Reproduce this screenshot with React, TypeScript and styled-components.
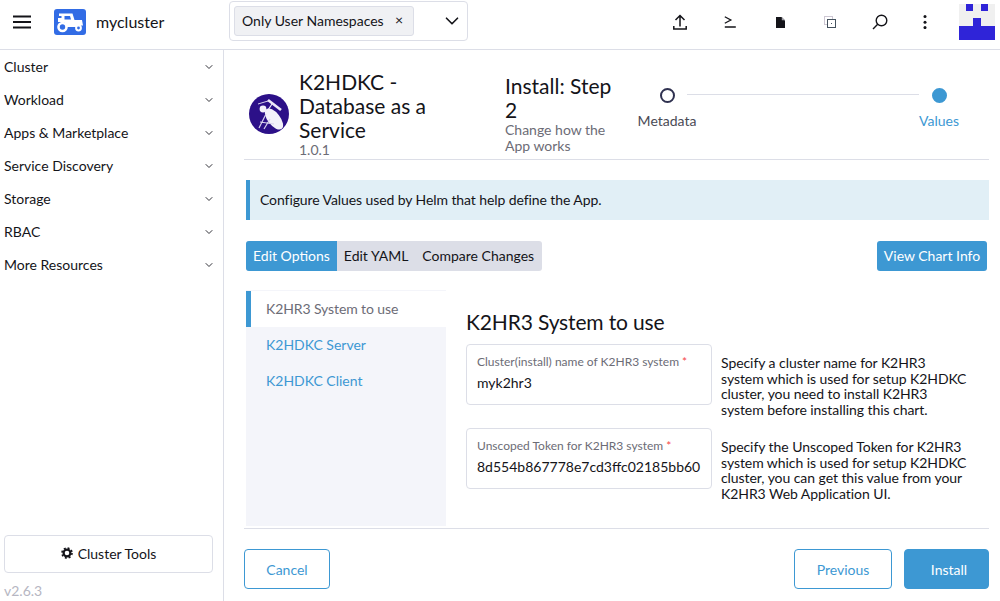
import { ChevronDown } from "lucide-react";
import styled, { createGlobalStyle } from "styled-components";

const GlobalStyle = createGlobalStyle`
  html, body {
    margin: 0;
    padding: 0;
    background: #fff;
  }
  * {
    box-sizing: border-box;
  }
  body {
    font-family: Lato, "Liberation Sans", sans-serif;
    font-size: 14px;
    color: #141419;
  }
`;

const Page = styled.div`
  width: 1000px;
  height: 601px;
  display: grid;
  grid-template-rows: 50px minmax(0, 1fr);
  grid-template-columns: 224px minmax(0, 1fr);
  overflow: hidden;
`;

const Header = styled.header`
  grid-column: 1 / 3;
  display: flex;
  align-items: center;
  padding-bottom: 5px;
  border-bottom: 1px solid #dcdee7;
`;

const Burger = styled.div`
  width: 54px;
  padding-left: 13px;
  display: flex;
`;

const ClusterBadge = styled.div`
  width: 32px;
  height: 26px;
  border-radius: 3px;
  background: #326ce5;
  display: flex;
`;

const ClusterName = styled.div`
  font-size: 16px;
  margin-left: 10px;
  width: 133px;
  padding-bottom: 2px;
`;

const NamespaceBox = styled.div`
  width: 239px;
  height: 40px;
  align-self: flex-start;
  margin-top: 1px;
  border: 1px solid #dcdee7;
  border-radius: 4px;
  padding: 4px;
  display: flex;
  align-items: center;
  justify-content: space-between;
`;

const NamespaceChip = styled.div`
  width: 180px;
  height: 30px;
  background: #f0f1f4;
  border: 1px solid #dcdee7;
  border-radius: 3px;
  padding: 0 10px 2px 7px;
  display: flex;
  align-items: center;
  justify-content: space-between;
  white-space: nowrap;
`;

const ChipClose = styled.span`
  font-size: 14px;
  line-height: 1;
`;

const HeaderActions = styled.div`
  margin-left: auto;
  display: flex;
  align-items: center;
  align-self: stretch;
`;

const ActionSlot = styled.div<{ $narrow?: boolean }>`
  width: ${(p) => (p.$narrow ? "40px" : "50px")};
  display: flex;
  align-items: center;
  justify-content: center;
`;

const Avatar = styled.div`
  width: 36px;
  height: 36px;
  margin: 0 5px 0 14px;
  flex: none;
  display: flex;
`;

const Sidebar = styled.aside`
  border-right: 1px solid #dcdee7;
  display: flex;
  flex-direction: column;
  min-height: 0;
`;

const NavList = styled.nav`
  flex: 1;
`;

const NavItem = styled.div`
  height: 33px;
  padding: 0 8px 0 4px;
  display: flex;
  align-items: center;
  justify-content: space-between;
  font-size: 14px;
`;

const SidebarFoot = styled.div`
  padding: 0 10px 0 4px;
`;

const ToolsButton = styled.div`
  height: 38px;
  padding-bottom: 2px;
  border: 1px solid #dcdee7;
  border-radius: 4px;
  display: flex;
  align-items: center;
  justify-content: center;
  gap: 5px;
`;

const Version = styled.div`
  height: 28px;
  padding-top: 9px;
  color: #b6b6c2;
`;

const Main = styled.main`
  padding: 0 11px 0 20px;
  display: flex;
  flex-direction: column;
  min-width: 0;
  min-height: 0;
`;

const TitleRow = styled.div`
  height: 110px;
  flex: none;
  display: flex;
  align-items: flex-start;
  border-bottom: 1px solid #dcdee7;
  padding-top: 20px;
`;

const ChartLogo = styled.div`
  width: 40px;
  height: 40px;
  margin: 24px 10px 0 5px;
  flex: none;
`;

const ChartInfo = styled.div`
  width: 206px;
  flex: none;
`;

const ChartName = styled.div`
  font-size: 21px;
  line-height: 24px;
  width: 135px;
`;

const Muted = styled.div`
  color: #6c6c76;
  line-height: 16px;
`;

const StepInfo = styled.div`
  width: 132px;
  flex: none;
  padding: 4px 17px 0 0;
`;

const StepTitle = styled.div`
  font-size: 21px;
  line-height: 24px;
`;

const Stepper = styled.div`
  flex: 1;
  margin-right: 20px;
  position: relative;
  display: flex;
  justify-content: space-between;
  padding-top: 5px;
`;

const StepLine = styled.div`
  position: absolute;
  left: 50px;
  right: 50px;
  top: 24px;
  height: 1px;
  background: #dcdee7;
`;

const Step = styled.div<{ $active?: boolean }>`
  width: 60px;
  display: flex;
  flex-direction: column;
  align-items: center;
  gap: 9px;
  color: ${(p) => (p.$active ? "#3d98d3" : "#4a4a55")};
`;

const StepDot = styled.div<{ $active?: boolean }>`
  width: 15px;
  height: 15px;
  margin-top: 13px;
  border-radius: 50%;
  border: 2px solid ${(p) => (p.$active ? "#3d98d3" : "#2f3150")};
  background: ${(p) => (p.$active ? "#3d98d3" : "#fff")};
`;

const Banner = styled.div`
  margin: 20px 0 0 2px;
  height: 40px;
  flex: none;
  background: #e1eff6;
  border-left: 4px solid #3d98d3;
  padding: 0 0 2px 10px;
  display: flex;
  align-items: center;
  letter-spacing: -0.09px;
`;

const TabsRow = styled.div`
  margin: 21px 2px 0 2px;
  flex: none;
  display: flex;
  justify-content: space-between;
`;

const TabGroup = styled.div`
  display: flex;
  height: 30px;
  padding-right: 1px;
  background: #dcdee7;
  border-radius: 3px;
  overflow: hidden;
`;

const Tab = styled.div<{ $active?: boolean }>`
  padding: 0 7px 2px;
  display: flex;
  align-items: center;
  background: ${(p) => (p.$active ? "#3d98d3" : "transparent")};
  color: ${(p) => (p.$active ? "#fff" : "#141419")};
`;

const InfoButton = styled.div`
  height: 30px;
  width: 110px;
  padding-bottom: 2px;
  background: #3d98d3;
  border-radius: 3px;
  color: #fff;
  display: flex;
  align-items: center;
  justify-content: center;
`;

const Editor = styled.div`
  margin: 19px 0 0 2px;
  display: flex;
  flex: 1;
  min-height: 0;
`;

const SideTabs = styled.div`
  width: 200px;
  height: 236px;
  padding-top: 1px;
  background: #f4f5fa;
  flex: none;
`;

const SideTab = styled.div<{ $active?: boolean }>`
  height: 36px;
  display: flex;
  align-items: center;
  padding-bottom: 2px;
  padding-left: ${(p) => (p.$active ? "15px" : "20px")};
  background: ${(p) => (p.$active ? "#fff" : "transparent")};
  border-left: ${(p) => (p.$active ? "5px solid #3d98d3" : "none")};
  color: ${(p) => (p.$active ? "#6c6c76" : "#3d98d3")};
  letter-spacing: ${(p) => (p.$active ? "-0.1px" : "0")};
`;

const Form = styled.div`
  padding: 19px 0 0 20px;
  flex: 1;
`;

const FormTitle = styled.div`
  font-size: 21px;
  line-height: 25px;
  margin-bottom: 10px;
  letter-spacing: -0.15px;
`;

const FieldRow = styled.div`
  display: flex;
  gap: 9px;
  margin-bottom: 10px;
`;

const Field = styled.div`
  width: 246px;
  height: 61px;
  border: 1px solid #dcdee7;
  border-radius: 4px;
  padding: 9px 10px 0;
  flex: none;
`;

const FieldLabel = styled.div`
  font-size: 12px;
  line-height: 15px;
  color: #6c6c76;
  white-space: nowrap;
`;

const Required = styled.span`
  color: #f64747;
`;

const FieldValue = styled.div`
  margin-top: 4px;
  line-height: 20px;
  white-space: nowrap;
`;

const FieldHelp = styled.div`
  line-height: 15.7px;
  padding-top: 11px;
  width: 250px;
  letter-spacing: -0.06px;
`;

const Footer = styled.div`
  height: 73px;
  flex: none;
  border-top: 1px solid #dcdee7;
  padding-top: 20px;
  display: flex;
  justify-content: space-between;
`;

const OutlineButton = styled.div<{ $width: number }>`
  width: ${(p) => p.$width}px;
  height: 40px;
  border: 1px solid #3d98d3;
  border-radius: 4px;
  color: #3d98d3;
  display: flex;
  align-items: center;
  justify-content: center;
`;

const FooterRight = styled.div`
  display: flex;
  gap: 12px;
`;

const PrimaryButton = styled(OutlineButton)`
  background: #3d98d3;
  color: #fff;
  padding-left: 5px;
`;

const navItems = [
  "Cluster",
  "Workload",
  "Apps & Marketplace",
  "Service Discovery",
  "Storage",
  "RBAC",
  "More Resources",
];

const BurgerIcon = () => (
  <svg width="18" height="14" viewBox="0 0 18 14" stroke="#141419" strokeWidth="2">
    <path d="M0 1.5h18M0 7h18M0 12.5h18" />
  </svg>
);

const TractorIcon = () => (
  <svg width="32" height="26" viewBox="0 0 32 26">
    <path d="M5 4.5h13.5l2 6.5H28l1 5.5h-5l-2 1.5h-9.5l-2.5-5H4v-4h3.5V7H5z" fill="#fff" />
    <path d="M10.5 7v3.5h6.5L16 7z" fill="#326ce5" />
    <circle cx="8.5" cy="18" r="4" fill="#326ce5" stroke="#fff" strokeWidth="2.6" />
    <circle cx="24.5" cy="19" r="2.4" fill="#326ce5" stroke="#fff" strokeWidth="2" />
  </svg>
);

const UploadIcon = () => (
  <svg width="14" height="16" viewBox="0 0 14 16" fill="none" stroke="#141419" strokeWidth="1.5">
    <path d="M7 12.5V1.5M2.5 6 7 1.5 11.5 6M.8 12v3h12.4v-3" />
  </svg>
);

const ShellIcon = () => (
  <svg width="12" height="12" viewBox="0 0 12 12" fill="none" stroke="#141419" strokeWidth="1.3">
    <path d="M.8.8l6 3.2-6 3.2M.8 11h11" />
  </svg>
);

const FileIcon = () => (
  <svg width="9" height="11" viewBox="0 0 9 11">
    <path d="M0 0h5.5L9 3.5V11H0z" fill="#141419" />
    <path d="M5.8 0 9 3.2H5.8z" fill="#a0a0a8" />
  </svg>
);

const CopyIcon = () => (
  <svg width="12" height="12" viewBox="0 0 12 12" fill="none" strokeWidth="1">
    <rect x="0.5" y="0.5" width="8" height="8" stroke="#9a8fa6" strokeDasharray="1 1" />
    <rect x="3.5" y="3.5" width="8" height="8" stroke="#45525e" fill="#fff" />
    <path d="M7.5 7v1" stroke="#45525e" />
  </svg>
);

const SearchIcon = () => (
  <svg width="16" height="16" viewBox="0 0 16 16" fill="none" stroke="#141419" strokeWidth="1.4">
    <circle cx="9.5" cy="6.5" r="5.3" />
    <path d="M5.7 10.3 1 15" />
  </svg>
);

const DotsIcon = () => (
  <svg width="4" height="14" viewBox="0 0 4 14" fill="#141419">
    <circle cx="2" cy="1.6" r="1.5" />
    <circle cx="2" cy="7.2" r="1.5" />
    <circle cx="2" cy="12.6" r="1.5" />
  </svg>
);

const GearIcon = () => (
  <svg width="12" height="12" viewBox="0 0 12 12">
    <circle cx="6" cy="6" r="3.4" fill="none" stroke="#141419" strokeWidth="2.2" />
    <circle cx="6" cy="6" r="5" fill="none" stroke="#141419" strokeWidth="1.6" strokeDasharray="2 1.93" />
  </svg>
);

const AvatarArt = () => (
  <svg width="36" height="36" viewBox="0 0 36 36" shapeRendering="crispEdges">
    <rect width="36" height="36" fill="#f0f0f0" />
    <rect x="7" y="0" width="7" height="7" fill="#2f24d8" />
    <rect x="22" y="0" width="7" height="7" fill="#2f24d8" />
    <rect x="14" y="14" width="8" height="8" fill="#2f24d8" />
    <rect x="0" y="22" width="36" height="14" fill="#2f24d8" />
  </svg>
);

const ChartArt = () => (
  <svg width="40" height="40" viewBox="0 0 40 40" fill="none">
    <circle cx="20" cy="20" r="20" fill="#2c1088" />
    <path d="M9 10l10-3" stroke="#d8d2ec" strokeWidth="1" />
    <path d="M19 6l13 10" stroke="#eeeaf8" strokeWidth="2.6" />
    <path d="M23 10 17 19" stroke="#eeeaf8" strokeWidth="1.2" />
    <ellipse cx="25" cy="25" rx="12.5" ry="6.2" transform="rotate(52 25 25)" fill="#f3f1fa" />
    <circle cx="14" cy="15" r="3.4" fill="#f3f1fa" />
    <path d="M10 34l7-14M15 35l6-10M11 28l14 2" stroke="#d8d2ec" strokeWidth="1.2" />
  </svg>
);

const App = () => {
  return (
    <Page>
      <GlobalStyle />
      <Header>
        <Burger>
          <BurgerIcon />
        </Burger>
        <ClusterBadge>
          <TractorIcon />
        </ClusterBadge>
        <ClusterName>mycluster</ClusterName>
        <NamespaceBox>
          <NamespaceChip>
            Only User Namespaces
            <ChipClose>×</ChipClose>
          </NamespaceChip>
          <ChevronDown size={22} color="#141419" strokeWidth={1.8} />
        </NamespaceBox>
        <HeaderActions>
          <ActionSlot>
            <UploadIcon />
          </ActionSlot>
          <ActionSlot>
            <ShellIcon />
          </ActionSlot>
          <ActionSlot>
            <FileIcon />
          </ActionSlot>
          <ActionSlot>
            <CopyIcon />
          </ActionSlot>
          <ActionSlot>
            <SearchIcon />
          </ActionSlot>
          <ActionSlot $narrow>
            <DotsIcon />
          </ActionSlot>
          <Avatar>
            <AvatarArt />
          </Avatar>
        </HeaderActions>
      </Header>
      <Sidebar>
        <NavList>
          {navItems.map((item) => (
            <NavItem key={item}>
              {item}
              <ChevronDown size={12} color="#33333a" strokeWidth={2} />
            </NavItem>
          ))}
        </NavList>
        <SidebarFoot>
          <ToolsButton>
            <GearIcon />
            Cluster Tools
          </ToolsButton>
          <Version>v2.6.3</Version>
        </SidebarFoot>
      </Sidebar>
      <Main>
        <TitleRow>
          <ChartLogo>
            <ChartArt />
          </ChartLogo>
          <ChartInfo>
            <ChartName>K2HDKC - Database as a Service</ChartName>
            <Muted>1.0.1</Muted>
          </ChartInfo>
          <StepInfo>
            <StepTitle>Install: Step 2</StepTitle>
            <Muted>Change how the App works</Muted>
          </StepInfo>
          <Stepper>
            <StepLine />
            <Step>
              <StepDot />
              Metadata
            </Step>
            <Step $active>
              <StepDot $active />
              Values
            </Step>
          </Stepper>
        </TitleRow>
        <Banner>Configure Values used by Helm that help define the App.</Banner>
        <TabsRow>
          <TabGroup>
            <Tab $active>Edit Options</Tab>
            <Tab>Edit YAML</Tab>
            <Tab>Compare Changes</Tab>
          </TabGroup>
          <InfoButton>View Chart Info</InfoButton>
        </TabsRow>
        <Editor>
          <SideTabs>
            <SideTab $active>K2HR3 System to use</SideTab>
            <SideTab>K2HDKC Server</SideTab>
            <SideTab>K2HDKC Client</SideTab>
          </SideTabs>
          <Form>
            <FormTitle>K2HR3 System to use</FormTitle>
            <FieldRow>
              <Field>
                <FieldLabel>
                  Cluster(install) name of K2HR3 system <Required>*</Required>
                </FieldLabel>
                <FieldValue>myk2hr3</FieldValue>
              </Field>
              <FieldHelp>
                Specify a cluster name for K2HR3 system which is used for setup K2HDKC cluster, you need to install
                K2HR3 system before installing this chart.
              </FieldHelp>
            </FieldRow>
            <FieldRow>
              <Field>
                <FieldLabel>
                  Unscoped Token for K2HR3 system <Required>*</Required>
                </FieldLabel>
                <FieldValue>8d554b867778e7cd3ffc02185bb60</FieldValue>
              </Field>
              <FieldHelp>
                Specify the Unscoped Token for K2HR3 system which is used for setup K2HDKC cluster, you can get this
                value from your K2HR3 Web Application UI.
              </FieldHelp>
            </FieldRow>
          </Form>
        </Editor>
        <Footer>
          <OutlineButton $width={86}>Cancel</OutlineButton>
          <FooterRight>
            <OutlineButton $width={98}>Previous</OutlineButton>
            <PrimaryButton $width={85}>Install</PrimaryButton>
          </FooterRight>
        </Footer>
      </Main>
    </Page>
  );
};

export default App;
